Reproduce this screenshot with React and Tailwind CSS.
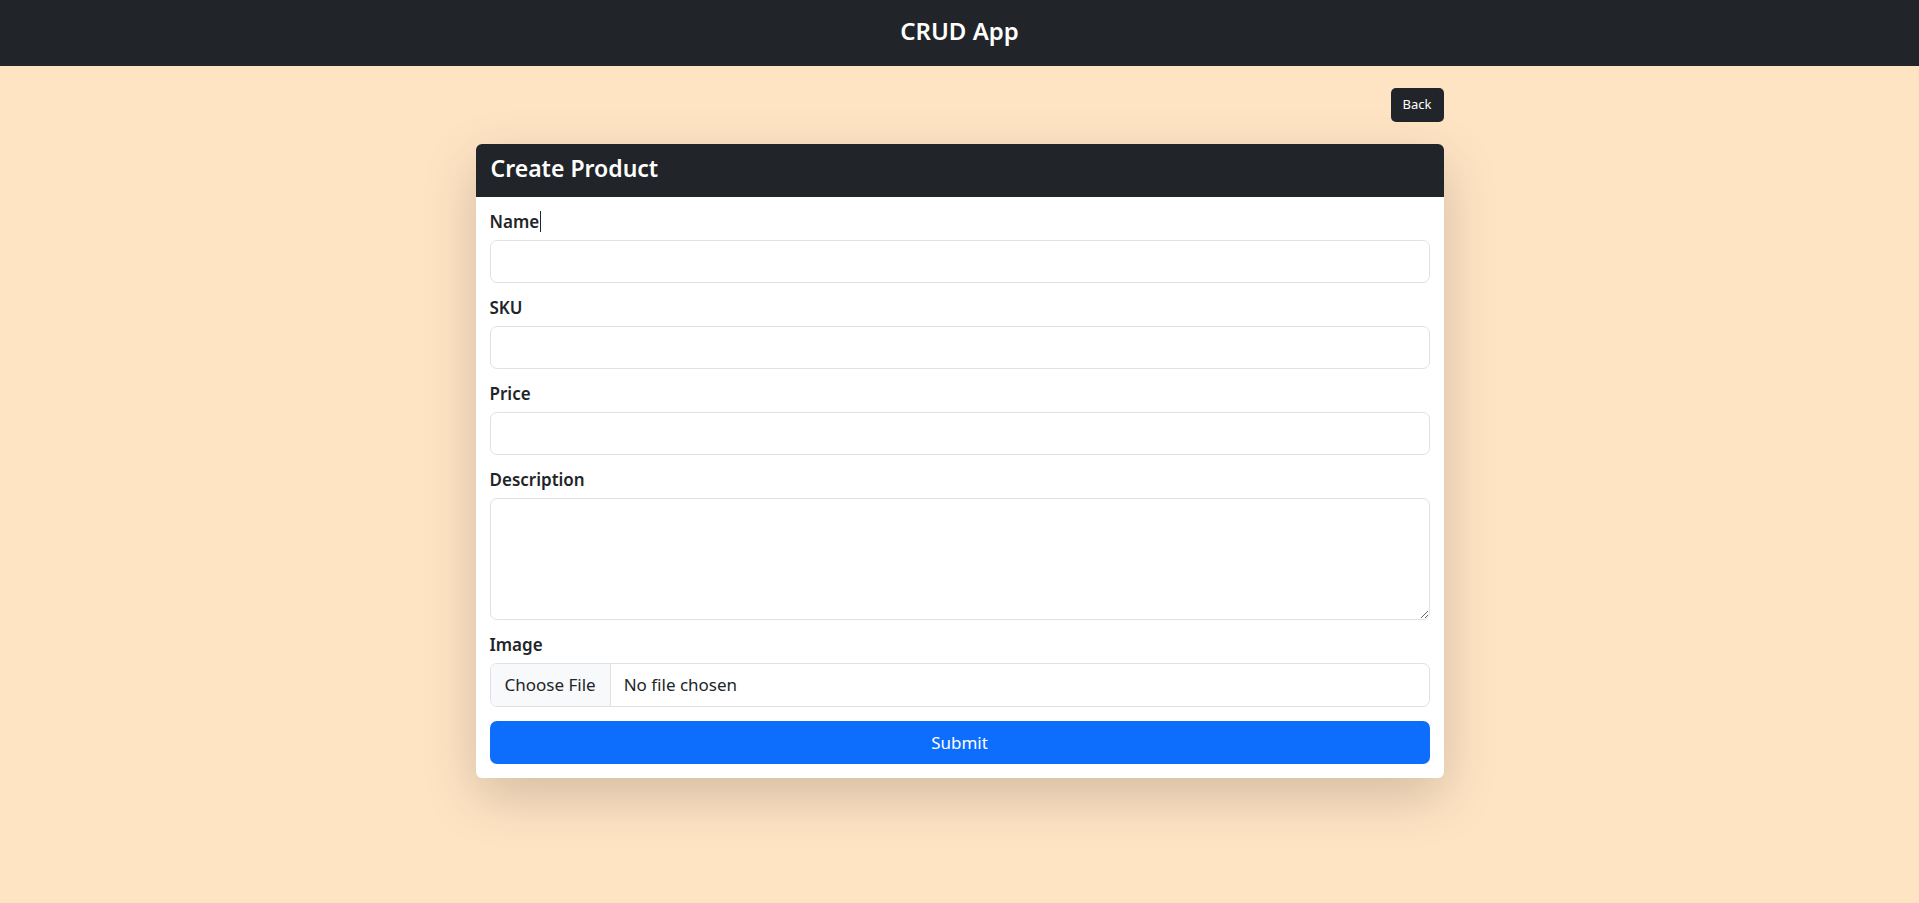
import React from "react";

const font = { fontFamily: '"Segoe UI", "Noto Sans", "Liberation Sans", sans-serif' };

const Field = ({ label, caret, children }) => (
  <div className="flex flex-col">
    <label className="text-[17px] leading-[27px] font-semibold text-[#212529] mb-[5px] flex items-center">
      {label}
      {caret && <span className="inline-block w-px h-[21px] bg-[#212529] ml-[1px]" />}
    </label>
    {children}
  </div>
);

const inputCls =
  "w-full h-[43px] rounded-[7px] border border-[#dee2e6] bg-white px-3 text-[17px] text-[#212529] outline-none";

export default function App() {
  return (
    <div className="min-h-[903px] bg-[#ffe4c4]" style={font}>
      <nav className="h-[66px] bg-[#212529] flex items-center justify-center pb-[5px]">
        <span className="text-white text-[24px] font-semibold">CRUD App</span>
      </nav>

      <div className="w-[968px] mx-auto pt-[22px]">
        <div className="flex justify-end">
          <button className="h-[34px] w-[53px] rounded-[5px] bg-[#212529] text-white text-[13px]">
            Back
          </button>
        </div>

        <div className="mt-[22px] bg-white rounded-[6px] shadow-[0_18px_54px_rgba(0,0,0,0.175)] overflow-hidden">
          <div className="h-[53px] bg-[#212529] flex items-center px-[15px] pb-[4px]">
            <h4 className="text-white text-[23px] font-semibold">Create Product</h4>
          </div>

          <form className="px-[14px] pt-[11px] pb-[14px] flex flex-col gap-[11px]">
            <Field label="Name" caret>
              <input className={inputCls} />
            </Field>
            <Field label="SKU">
              <input className={inputCls} />
            </Field>
            <Field label="Price">
              <input className={inputCls} />
            </Field>
            <Field label="Description">
              <textarea className="w-full h-[122px] rounded-[7px] border border-[#dee2e6] bg-white px-3 py-2 text-[17px] outline-none block" />
            </Field>
            <Field label="Image">
              <div className="h-[44px] rounded-[7px] border border-[#dee2e6] bg-white flex items-stretch overflow-hidden text-[17px] text-[#212529]">
                <span className="bg-[#f8f9fa] border-r border-[#dee2e6] px-[14px] flex items-center">
                  Choose File
                </span>
                <span className="pl-[13px] flex items-center">No file chosen</span>
              </div>
            </Field>
            <button
              type="button"
              className="mt-[3px] h-[43px] w-full rounded-[7px] bg-[#0d6efd] text-white text-[17px]"
            >
              Submit
            </button>
          </form>
        </div>
      </div>
    </div>
  );
}
